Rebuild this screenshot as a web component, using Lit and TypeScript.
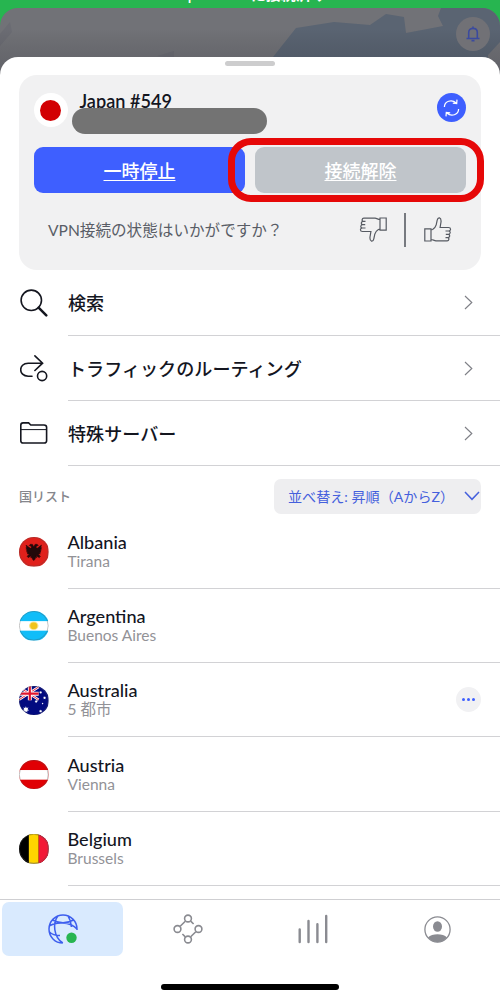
import { LitElement, html, svg, css } from "lit";
import { customElement } from "lit/decorators.js";

const star = (x: number, y: number, r: number) => {
  const pts: string[] = [];
  for (let i = 0; i < 14; i++) {
    const a = (Math.PI * i) / 7 - Math.PI / 2;
    const q = i % 2 ? r * 0.5 : r;
    pts.push(`${(x + q * Math.cos(a)).toFixed(2)},${(y + q * Math.sin(a)).toFixed(2)}`);
  }
  return svg`<polygon points=${pts.join(" ")} fill="#fff"></polygon>`;
};

const flags: Record<string, unknown> = {
  al: svg`<rect width="30" height="30" fill="#e0201b"></rect>
    <path d="M15 10.2 L13.7 7.5 L11.6 7.4 L10.4 8.6 L12.2 9.2 L12.8 10.8 L11.5 11.5 L7.2 8.3 L8 11 L7 11 L8.4 12.9 L7.2 13 L8.8 14.6 L7.6 15 L9.3 16.2 L8.3 17 L10.6 17.2 L8.2 19.8 L9.5 19.8 L9.2 21 L11.8 19.6 L12.6 18.6 L12 21 L13.2 20.7 L13.6 22.4 L15 24 L16.4 22.4 L16.8 20.7 L18 21 L17.4 18.6 L18.2 19.6 L20.8 21 L20.5 19.8 L21.8 19.8 L19.4 17.2 L21.7 17 L20.7 16.2 L22.4 15 L21.2 14.6 L22.8 13 L21.6 12.9 L23 11 L22 11 L22.8 8.3 L18.5 11.5 L17.2 10.8 L17.8 9.2 L19.6 8.6 L18.4 7.4 L16.3 7.5 Z" fill="#22090a" stroke="#22090a" stroke-width=".6"></path>`,
  ar: svg`<rect width="30" height="30" fill="#fff"></rect>
    <rect width="30" height="10.3" fill="#10bdf8"></rect><rect y="20" width="30" height="10" fill="#10bdf8"></rect>
    <ellipse cx="15" cy="15" rx="4.8" ry="4.4" fill="#f8e28a"></ellipse><ellipse cx="15" cy="15" rx="3.6" ry="3.4" fill="#f0c41e"></ellipse>`,
  au: svg`<rect width="30" height="30" fill="#020a80"></rect>
    <path d="M0 1 L20 14 M20 1 L0 14" stroke="#fff" stroke-width="2.6"></path>
    <path d="M0 1 L20 14 M20 1 L0 14" stroke="#e0152d" stroke-width="0.9"></path>
    <path d="M11 0 V14.5 M0 7.8 H20" stroke="#fff" stroke-width="4"></path>
    <path d="M11 0 V14.5 M0 7.8 H20" stroke="#e0152d" stroke-width="2.2"></path>
    ${star(7, 24, 3.4)}${star(22, 6.5, 1.6)}${star(26, 12, 1.7)}${star(17.5, 15.8, 1.7)}${star(24, 17.8, 1)}${star(22, 25.6, 1.8)}`,
  at: svg`<rect width="30" height="30" fill="#e00004"></rect><rect y="10.2" width="30" height="9.8" fill="#fff"></rect>`,
  be: svg`<rect width="30" height="30" fill="#000"></rect><rect x="10" width="10" height="30" fill="#ffd500"></rect><rect x="20" width="10" height="30" fill="#f31836"></rect>`,
};

const chevron = html`<svg class="chev" width="9" height="15" viewBox="0 0 9 15" fill="none" stroke="#7f8087" stroke-width="1.15"><path d="M1 1 L7.8 7.5 L1 14"></path></svg>`;

const thumb = svg`<path d="M.8 11.8 H7 V24 H.8 Z M7 12.8 L8.6 12.5 C10.4 11.4 11.6 9.8 12.2 7.8 L13.2 3.2 C13.7 1 14.6 .7 15.5 .9 C16.9 1.3 17.2 3 17 5 L16.1 10.5 H24.5 C27.2 10.5 27.2 14 24.7 14 H21.5 M24.7 14 C26.9 14.2 26.6 17.3 24.3 17.3 H21.8 M24.3 17.3 C26.4 17.6 26 20.6 23.8 20.6 H21.5 M23.8 20.6 C25.5 21 25.1 23.8 23.2 23.8 H12 C10 23.7 9 22.5 7 22.5"></path>`;

const menu = [
  {
    label: "検索",
    icon: svg`<circle cx="11.3" cy="11.3" r="10.2"></circle><path d="M18.6 18.6 L26.3 26.3" stroke-width="2.5"></path>`,
  },
  {
    label: "トラフィックのルーティング",
    icon: svg`<path d="M12 22.2 H8.2 C-1.8 22.2 -1.8 9.2 8.2 9.2 H22.5 M14.9 1.8 L22.6 9.2 L14.9 16.5"></path><circle cx="22.1" cy="22" r="4.6"></circle>`,
  },
  {
    label: "特殊サーバー",
    icon: svg`<path d="M.8 21.5 V6.2 Q.8 3.9 3 3.9 H8.6 L10.8 6 H24 Q26.6 6 26.6 8.3 V21.7 Q26.6 24 24 24 H3.2 Q.8 24 .8 21.7 Z"></path><path d="M.8 10.6 H26.4" stroke-width="1"></path>`,
  },
];

const countries = [
  { code: "al", name: "Albania", city: "Tirana" },
  { code: "ar", name: "Argentina", city: "Buenos Aires" },
  { code: "au", name: "Australia", city: "5 都市", more: true },
  { code: "at", name: "Austria", city: "Vienna" },
  { code: "be", name: "Belgium", city: "Brussels" },
];

@customElement("app-root")
export class AppRoot extends LitElement {
  static styles = css`
    :host { display: block; width: 500px; height: 1000px; overflow: hidden; position: relative; background: #27b550; font-family: Lato, "Noto Sans CJK JP", sans-serif; color: #14161f; }
    * { box-sizing: border-box; }
    svg { display: block; flex: none; }
    .status { height: 8px; display: flex; justify-content: center; align-items: flex-end; color: #fff; font-size: 15px; line-height: 20px; font-weight: 600; white-space: nowrap; overflow: hidden; }
    .status span { margin-bottom: 4px; }
    .map { height: 70px; border-radius: 18px 18px 0 0; overflow: hidden; background: #717277; position: relative; }
    .bell { position: absolute; right: 10px; top: 9px; width: 34px; height: 34px; border-radius: 50%; background: #717176; display: flex; align-items: center; justify-content: center; }
    .sheet { margin-top: -21px; position: relative; background: #fff; border-radius: 18px 18px 0 0; height: 943px; display: flex; flex-direction: column; }
    .grip { width: 50px; height: 5px; border-radius: 3px; background: #cdcdce; margin: 4px auto 9px; flex: none; }
    .card { margin: 0 19px; height: 195px; flex: none; border-radius: 18px; background: #f1f1f2; position: relative; padding: 18px 15px 0 15px; }
    .head { display: flex; height: 54px; }
    .jp { width: 34px; height: 34px; border-radius: 50%; background: #fff; display: flex; align-items: center; justify-content: center; }
    .jp i { width: 21px; height: 21px; border-radius: 50%; background: #d20003; margin-right: 1px; }
    .server { margin-left: 11.5px; flex: 1; font-size: 18.1px; line-height: 16px; font-weight: 600; }
    .mask { position: absolute; left: 53px; top: 33px; width: 195px; height: 26px; border-radius: 13px; background: #737373; }
    .sync { width: 29px; height: 29px; border-radius: 50%; background: #3e5fff; display: flex; align-items: center; justify-content: center; }
    .buttons { display: grid; grid-template-columns: 211px 211px; gap: 10px; }
    .btn { height: 46px; border-radius: 9px; background: #3e5fff; color: #fff; display: flex; align-items: center; justify-content: center; font-size: 18px; font-weight: 500; padding-bottom: 1px; text-decoration: underline; text-decoration-thickness: 1px; text-underline-offset: 2px; }
    .off { background: #c0c5ca; }
    .ring { position: absolute; left: 209px; top: 63px; width: 256px; height: 64px; border: 7px solid #e60808; border-radius: 23px; }
    .rate { display: flex; align-items: center; height: 73px; padding-left: 14px; font-size: 15.6px; color: #595d66; white-space: nowrap; }
    .rate .q { flex: 1; margin-top: -2px; }
    .bar { width: 2px; height: 34px; background: #777a80; margin: 0 18px 0 17px; }
    .rate .up { margin-right: 14px; }
    .row { display: flex; flex: none; height: 65.2px; padding-left: 20px; }
    .first { height: 65.6px; }
    .ico { width: 48px; display: flex; align-items: center; }
    .body { flex: 1; border-bottom: 1.3px solid #d2d2d5; display: flex; align-items: center; justify-content: space-between; padding-right: 27px; font-size: 18.1px; line-height: 26px; font-weight: 500; padding-top: 1px; }
    .body span { margin-top: 1px; }
    .tools { display: flex; flex: none; height: 48px; align-items: flex-end; justify-content: space-between; padding: 0 19px; }
    .caption { font-size: 13px; line-height: 36px; font-weight: 500; color: #85868c; }
    .sort { width: 207px; height: 35px; border-radius: 7px; background: #eeeef0; color: #4560dd; display: flex; align-items: center; justify-content: space-between; padding: 0 1px 0 14px; font-size: 14.1px; white-space: nowrap; }
    .list { padding-top: 0.7px; flex: none; }
    .country { display: flex; flex: none; height: 74.25px; padding-left: 19px; }
    .flag { width: 48.5px; display: flex; align-items: center; }
    .flag svg { border-radius: 50%; }
    .info { flex: 1; border-bottom: 1.3px solid #d2d2d5; display: flex; align-items: center; justify-content: space-between; padding-right: 19px; }
    .name { font-size: 18.1px; line-height: 20px; font-weight: 500; }
    .city { font-size: 15.5px; line-height: 19px; color: #929297; }
    .more { width: 25px; height: 25px; border-radius: 50%; background: #f1f1f3; display: flex; align-items: center; justify-content: center; gap: 2px; }
    .more i { width: 3.2px; height: 3.2px; border-radius: 50%; background: #3e5fff; }
    .nav { margin-top: auto; flex: none; height: 101px; border-top: 1px solid #cfcfd2; display: grid; grid-template-columns: repeat(4, 125px); grid-template-rows: 54px 1fr; padding-top: 2px; background: #fff; }
    .tab { display: flex; align-items: center; justify-content: center; margin: 0 2px 0 2px; border-radius: 7px; }
    .home { grid-column: 1 / 5; justify-self: center; margin-top: 28px; width: 178px; height: 6px; border-radius: 3px; background: #000; }
    .on { background: #d9eafe; }
  `;

  render() {
    return html`
      <div class="status"><span>Japan #549に接続済み</span></div>
      <div class="map">
        <svg width="500" height="70" viewBox="0 8 500 70">
          <defs><linearGradient id="g" x1="0" y1="0" x2="0" y2="1"><stop offset="0.3" stop-color="#000" stop-opacity="0"></stop><stop offset="1" stop-color="#202030" stop-opacity=".2"></stop></linearGradient></defs>
          <path d="M273 57 L296 28 L334 22 L370 25 L386 14 L404 17 L406 33 L443 26 L438 16 L441 8 H500 V42 L488 55 V78 H255 Z" fill="#5a6472"></path>
          <path d="M0 34 L10 22 L12 32 L0 46 Z M157 56 L174 51 V58 Z" fill="#6b6c73"></path>
          <rect y="8" width="500" height="70" fill="url(#g)"></rect>
        </svg>
        <div class="bell"><svg width="14" height="16" viewBox="0 0 14 16" fill="none" stroke="#3b4a9e" stroke-width="1.6"><path d="M.5 12.5 H13.5 M2.7 12.5 V6.5 C2.7 1 11.3 1 11.3 6.5 V12.5 M7 2.5 V.4"></path><path d="M5.5 14.6 H8.5" stroke-width="1.8"></path></svg></div>
      </div>
      <div class="sheet">
        <div class="grip"></div>
        <div class="card">
          <div class="head">
            <div class="jp"><i></i></div>
            <div class="server">Japan #549</div>
            <div class="sync"><svg width="17" height="18" viewBox="0 0 17 18" fill="none" stroke="#fff" stroke-width="1.25"><path d="M1.4 8 C1.4 2.2 8.6 -.2 13.2 4 M14 .6 L13.7 4.6 L9.8 4.2 M15.6 10 C15.6 15.8 8.4 18.2 3.8 14 M3 17.4 L3.3 13.4 L7.2 13.8"></path></svg></div>
          </div>
          <div class="buttons"><div class="btn">一時停止</div><div class="btn off">接続解除</div></div>
          <div class="rate">
            <span class="q">VPN接続の状態はいかがですか？</span>
            <svg width="28" height="25" viewBox="0 0 28 25" fill="none" stroke="#565a62" stroke-width="1.2"><g transform="rotate(180 14 12.5)">${thumb}</g></svg>
            <div class="bar"></div>
            <svg class="up" width="28" height="25" viewBox="0 0 28 25" fill="none" stroke="#565a62" stroke-width="1.2">${thumb}</svg>
          </div>
          <div class="mask"></div>
          <div class="ring"></div>
        </div>
        ${menu.map(
          (m, i) => html`<div class="row ${i === 0 ? "first" : ""}">
            <div class="ico"><svg width="28" height="28" viewBox="0 0 28 28" fill="none" stroke="#14161f" stroke-width="1.6" stroke-linecap="round">${m.icon}</svg></div>
            <div class="body"><span>${m.label}</span>${chevron}</div>
          </div>`
        )}
        <div class="tools">
          <span class="caption">国リスト</span>
          <div class="sort"><span>並べ替え: 昇順（AからZ）</span><svg width="16" height="10" viewBox="0 0 16 10" fill="none" stroke="#4560dd" stroke-width="1.5"><path d="M1 1 L8 8.3 L15 1"></path></svg></div>
        </div>
        <div class="list">
          ${countries.map(
            (c) => html`<div class="country">
              <div class="flag"><svg width="29.5" height="29.5" viewBox="0 0 30 30">${flags[c.code]}<circle cx="15" cy="15" r="14.7" fill="none" stroke="#555" stroke-opacity=".5" stroke-width=".7"></circle></svg></div>
              <div class="info">
                <div><div class="name">${c.name}</div><div class="city">${c.city}</div></div>
                ${c.more ? html`<div class="more"><i></i><i></i><i></i></div>` : ""}
              </div>
            </div>`
          )}
        </div>
        <div class="nav">
          <div class="tab on"><svg width="30" height="30" viewBox="0 0 30 30" fill="none" stroke="#3e5fee" stroke-width="1.5"><path d="M14.8 29 C7 29 1 22.8 1 15 A14 14 0 0 1 29 15 V16 M14.8 29 C5.5 23 4.5 9 10 1.8 M20 1.8 C22 5 23.2 8.5 23.4 13 M4.5 6 C11 9.5 19 9.5 25.5 6 M1.5 12 C7 8 22 7 29 15 M1.5 18 C4 20.5 7 21.4 12 21.6"></path><circle cx="23.5" cy="23.8" r="5.2" fill="#27b550" stroke="none"></circle></svg></div>
          <div class="tab"><svg width="30" height="30" viewBox="0 0 30 30" fill="none" stroke="#8a8b91" stroke-width="1.6"><circle cx="15" cy="4.5" r="3.4"></circle><circle cx="4.5" cy="15" r="3.4"></circle><circle cx="25.5" cy="15" r="3.4"></circle><circle cx="15" cy="25.5" r="3.4"></circle><path d="M12.3 7.2 L7.2 12.3 M17.7 7.2 L20.6 10 M22.8 17.7 L17.7 22.8 M12.3 22.8 L9.4 20"></path></svg></div>
          <div class="tab"><svg width="30" height="30" viewBox="0 0 30 30" fill="none" stroke="#8a8b91" stroke-width="2.4" stroke-linecap="round"><path d="M1.7 15.5 V28 M10.5 7 V28 M19.4 10.3 V28 M28.2 2 V28"></path></svg></div>
          <div class="tab"><svg width="27" height="27" viewBox="0 0 27 27"><circle cx="13.5" cy="13.5" r="12.6" fill="none" stroke="#8a8b91" stroke-width="1.3"></circle><ellipse cx="13.5" cy="10.5" rx="4.5" ry="5.2" fill="#8a8b91"></ellipse><path d="M4 21.5 C8 17.3 19 17.3 23 21.5 C18 27.7 9 27.7 4 21.5 Z" fill="#8a8b91"></path></svg></div>
          <div class="home"></div>
        </div>
      </div>
    `;
  }
}
